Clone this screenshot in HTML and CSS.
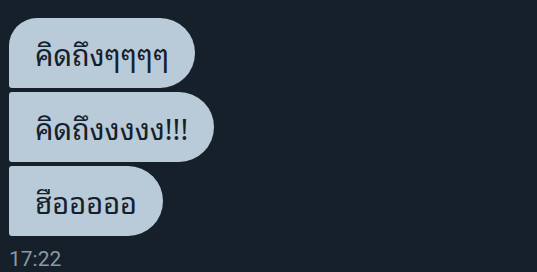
FILE: index.html
```html
<!DOCTYPE html>
<html lang="th">
<head>
<meta charset="UTF-8">
<meta name="viewport" content="width=device-width, initial-scale=1.0">
<title>Chat</title>
<link rel="stylesheet" href="styles.css">
</head>
<body>
<div class="chat">
    <ul class="msg_group">
        <li class="bubble first">คิดถึงๆๆๆๆ</li>
        <li class="bubble">คิดถึงงงงง!!!</li>
        <li class="bubble last">ฮือออออ</li>
    </ul>
    <p class="time">17:22</p>
</div>
</body>
</html>
```

FILE: styles.css
```css
* {margin: 0; padding: 0;}
li {list-style: none;}
body {
    background: #15202b;
    font-family: "Noto Sans Thai Looped", "Noto Sans Thai UI", "Noto Sans Thai", "Noto Sans", sans-serif;
}
.chat {
    padding: 18px 9px 0;
}
.msg_group {
    display: flex;
    flex-direction: column;
    align-items: flex-start;
    gap: 4px;
}
.msg_group .bubble {
    height: 70px;
    display: flex;
    align-items: center;
    padding: 0 26px;
    background: #b9cbd9;
    color: #15202b;
    font-size: 29px;
    border-radius: 3px 35px 35px 3px;
}
.msg_group .bubble.first {
    border-top-left-radius: 28px;
}
.chat .time {
    margin-top: 11px;
    color: #8b98a5;
    font-family: "Roboto", "Liberation Sans", sans-serif;
    font-size: 21px;
}
```
